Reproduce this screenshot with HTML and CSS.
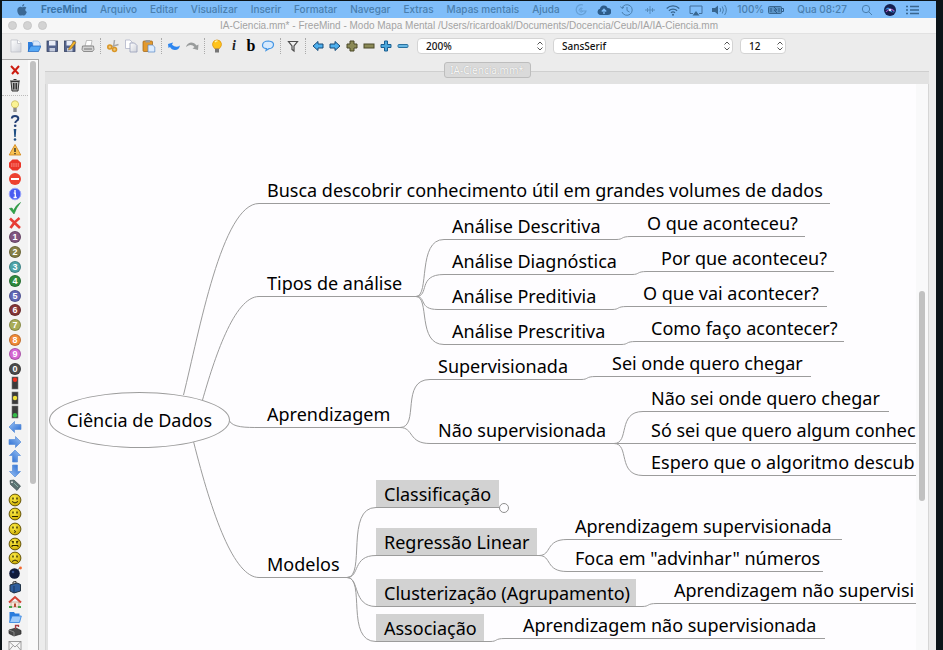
FILE: index.html
```html
<!DOCTYPE html>
<html lang="pt-BR">
<head>
<meta charset="utf-8">
<title>IA-Ciencia.mm* - FreeMind</title>
<link rel="stylesheet" href="styles.css">
</head>
<body>
<svg class="defs" aria-hidden="true">
  <defs>
    <radialGradient id="gy" cx=".4" cy=".35" r=".7"><stop offset="0" stop-color="#fff04a"/><stop offset="1" stop-color="#c9a800"/></radialGradient>
    <linearGradient id="gb" x1="0" y1="0" x2="1" y2="1"><stop offset="0" stop-color="#9cc4f5"/><stop offset="1" stop-color="#2468d0"/></linearGradient>
    <linearGradient id="gp" x1="0" y1="0" x2="1" y2="1"><stop offset="0" stop-color="#fff"/><stop offset="1" stop-color="#cfd2da"/></linearGradient>
    <symbol id="arrow" viewBox="0 0 14 14"><path d="M1 7 6.500 1.500V4.500H13V9.500H6.500V12.500Z" fill="url(#gb)" stroke="#5b8fd8" stroke-width=".7"/></symbol>
    <symbol id="nav" viewBox="0 0 14 14"><path d="M2 7 7 2.500V5H12V9H7V11.500Z" fill="#4fb0ee" stroke="#164a78" stroke-width="1"/></symbol>
    <symbol id="light" viewBox="0 0 14 14"><rect x="4" y="1" width="6" height="12" fill="#3b3b3b" stroke="#777" stroke-width=".6"/></symbol>
    <symbol id="face" viewBox="0 0 14 14"><circle cx="7" cy="7" r="5.900" fill="url(#gy)" stroke="#5b4b00" stroke-width=".9"/><path d="M5 4.500V6.500M9 4.500V6.500" stroke="#2c2400" stroke-width="1.300"/></symbol>
    <symbol id="updown" viewBox="0 0 8 12"><path d="M1.500 4.500 4 2 6.500 4.500M1.500 7.500 4 10 6.500 7.500" fill="none" stroke="#555" stroke-width="1"/></symbol>
  </defs>
</svg>
<div class="screen">
  <header class="menubar">
    <button class="apple" aria-label="Apple"><svg viewBox="0 0 12 12"><path d="M8.300 0C8.300 1.600 7.300 2.500 6.100 2.500 6.100 1.200 7 .2 8.300 0ZM6.200 3.300C6.800 3.300 7.400 2.700 8.500 2.800 9.300 2.800 10 3.200 10.400 3.800 8.700 4.900 9 7.200 10.800 7.900 10.200 9.700 9.100 11.600 7.900 11.600 7.200 11.600 6.900 11.200 6.200 11.200 5.400 11.200 5.100 11.600 4.400 11.600 2.700 11.600.9 8 1.400 5.500 1.800 3.200 4 2.400 5.200 3Z" fill="#3b6894"/></svg></button>
    <nav class="menus">
      <button class="app">FreeMind</button><button>Arquivo</button><button>Editar</button><button>Visualizar</button><button>Inserir</button><button>Formatar</button><button>Navegar</button><button>Extras</button><button>Mapas mentais</button><button>Ajuda</button>
    </nav>
    <div class="status">
      <svg viewBox="0 0 14 14" opacity=".45"><path d="M9 2A5 5 0 1 0 12 8H7V5" fill="none" stroke="#4a7fae" stroke-width="1.200"/><path d="M8.500 5.500A2 2 0 1 0 9 8" fill="none" stroke="#4a7fae"/></svg>
      <svg viewBox="0 0 14 14"><path d="M3.500 12A3.200 3.200 0 0 1 3 5.700 4 4 0 0 1 10.600 5 3.500 3.500 0 0 1 11 12Z" fill="#2d5c8a"/><path d="M7 11V6.500M4.800 8.500 7 6.200 9.200 8.500" fill="none" stroke="#7fbdf9" stroke-width="1.300"/></svg>
      <svg viewBox="0 0 14 14"><path d="M2 5A5.300 5.300 0 1 1 2 9M.5 3.500 2 5.500 4 4.300M7 4V7.500L9.500 9" fill="none" stroke="#4a7fae"/></svg>
      <svg viewBox="0 0 14 14"><path d="M2 7H12M4.500 5V9M7 3V11M9.500 5V9" fill="none" stroke="#568cbd"/></svg>
      <svg viewBox="0 0 14 14"><path d="M.7 5.500A9 9 0 0 1 13.300 5.500M2.900 7.700A6 6 0 0 1 11.100 7.700M5 9.800A3 3 0 0 1 9 9.800" fill="none" stroke="#38668f" stroke-width="1.300"/><circle cx="7" cy="11.700" r="1" fill="#38668f"/></svg>
      <svg viewBox="0 0 14 14"><path d="M4 10.500H1V3H13V10.500H10" fill="none" stroke="#426f9b"/><path d="M3.500 12.500 7 8 10.500 12.500Z" fill="#38668f"/></svg>
      <svg class="wide" viewBox="0 0 16 14"><path d="M0 5H3L6 2.500V11.500L3 9H0Z" fill="#38668f"/><path d="M8 5Q9.500 7 8 9M10.300 3.500Q12.500 7 10.300 10.500M12.600 2Q16 7 12.600 12" fill="none" stroke="#4a7fae"/></svg>
      <span class="pct">100%</span>
      <svg class="wide" viewBox="0 0 16 14"><rect x=".5" y="3.500" width="13" height="7" rx="1" fill="#5b93c5" stroke="#38668f"/><path d="M14 5.500H15.500V8.500H14M6 4 9 7H6L9 10M3 5V9M11 5V9" fill="none" stroke="#2d5c8a"/></svg>
      <span class="clock">Qua 08:27</span>
      <svg class="search" viewBox="0 0 14 14"><circle cx="6" cy="6" r="3.700" fill="none" stroke="#4a7fae"/><path d="M8.800 8.800 12 12" stroke="#4a7fae"/></svg>
      <svg class="siri" viewBox="0 0 14 14"><circle cx="7" cy="7" r="6" fill="#15204f"/><path d="M2 7Q5 2 8 7T12 7Q9 11 7 8T2 7Z" fill="#358ce0"/><path d="M3 9Q7 4 11 8" fill="none" stroke="#a957c7" stroke-width="1.200"/><circle cx="7" cy="7" r="1.300" fill="#d9f4ff"/></svg>
      <svg class="list" viewBox="0 0 14 14"><path d="M0 3.500H2M4 3.500H13M0 7H2M4 7H13M0 10.500H2M4 10.500H13" stroke="#38668f" stroke-width="1.300"/></svg>
    </div>
  </header>

  <div class="titlebar">
    <div class="lights"><i></i><i></i><i></i></div>
    <div class="title">IA-Ciencia.mm* - FreeMind - Modo Mapa Mental /Users/ricardoakl/Documents/Docencia/Ceub/IA/IA-Ciencia.mm</div>
  </div>

  <div class="toolbar">
    <div class="group">
      <button aria-label="Novo"><svg viewBox="0 0 14 14"><path d="M2 1H8.500L12 4.500V13H2Z" fill="url(#gp)" stroke="#b9bbc4" stroke-width=".7"/><path d="M8.500 1V4.500H12" fill="#fff" stroke="#b9bbc4" stroke-width=".7"/></svg></button>
      <button aria-label="Abrir"><svg viewBox="0 0 14 14"><path d="M1 3H5L6 4.500H11V12H1Z" fill="#2f7fdd"/><path d="M6 2H11L13 4V8H6Z" fill="#dbe9fa" stroke="#7fa8d8" stroke-width=".5"/><path d="M3.500 7H14L11.500 12.500H1Z" fill="#55a8f5" stroke="#1b62bb" stroke-width=".7"/></svg></button>
      <button aria-label="Salvar"><svg viewBox="0 0 14 14"><rect x="2" y="2" width="10.500" height="10.500" fill="#54648e" stroke="#35405f" stroke-width=".8"/><path d="M4 2H10.500V6.500H4Z" fill="#e9edf7"/><path d="M4.500 9H10V12.500H4.500Z" fill="#c4cbdd"/></svg></button>
      <button aria-label="Salvar como"><svg viewBox="0 0 14 14"><rect x="1.500" y="2" width="10.500" height="10.500" fill="#54648e" stroke="#35405f" stroke-width=".8"/><path d="M3.500 2H9.500V6.500H3.500Z" fill="#e9edf7"/><path d="M4 9H9.500V12.500H4Z" fill="#c4cbdd"/><path d="M6 9 11 2 13 3.500 8 10 5.500 11Z" fill="#f2b42b" stroke="#855d17" stroke-width=".5"/></svg></button>
      <button aria-label="Imprimir"><svg viewBox="0 0 14 14"><path d="M4 7 5.500 1.500H11L10 7Z" fill="#fff" stroke="#999" stroke-width=".6"/><path d="M1.500 7H12.500L13 10.500 11.500 12.500H2.500L1 10.500Z" fill="#d2d2d2" stroke="#777" stroke-width=".8"/><path d="M3 10H11" stroke="#777"/></svg></button>
    </div>
    <div class="group">
      <button aria-label="Recortar"><svg viewBox="0 0 14 14"><path d="M8.500 1 7.500 8M12.500 5.500 6 7.500" stroke="#a9a9a9" stroke-width="1.500"/><circle cx="3.800" cy="8" r="2" fill="#f2c878" stroke="#d99627" stroke-width="1.600"/><circle cx="8.500" cy="10.500" r="2" fill="#f2c878" stroke="#d99627" stroke-width="1.600"/></svg></button>
      <button aria-label="Copiar"><svg viewBox="0 0 14 14"><path d="M1.500 1H6L8 3V9.500H1.500Z" fill="#fff" stroke="#b1b5c9" stroke-width=".8"/><path d="M6 4H10.500L13 6.500V13H6Z" fill="url(#gp)" stroke="#979eb9" stroke-width=".8"/></svg></button>
      <button aria-label="Colar"><svg viewBox="0 0 14 14"><rect x="1" y="2" width="9.500" height="10.500" rx="1" fill="#e3992c" stroke="#9c6214" stroke-width=".7"/><rect x="3.500" y="1" width="4.500" height="2.500" fill="#9b9b9b"/><path d="M6 6H10.500L12.800 8V13H6Z" fill="#dcecff" stroke="#5688c4" stroke-width=".7"/></svg></button>
    </div>
    <div class="group">
      <button aria-label="Desfazer"><svg viewBox="0 0 14 14"><path d="M1 5 6 3.500 5 5.800Q9 9.500 13 6.500 12 11 8 11 4.500 11 3 8L1.500 9Z" fill="#2e86ef"/></svg></button>
      <button aria-label="Refazer"><svg viewBox="0 0 14 14"><path d="M13 11 7.500 9.500 9.500 8Q6 4 1 8 2 4 6 3.500 9.500 3.500 11.500 6.500L13.500 5.500Z" fill="#999c9c"/></svg></button>
    </div>
    <div class="group tight">
      <button aria-label="Ícone"><svg viewBox="0 0 14 14"><path d="M4.500 9.500Q2 6.500 2.600 4.500A4.500 4.500 0 0 1 11.400 4.500Q12 6.500 9.500 9.500Z" fill="#ffc31c" stroke="#d88b00" stroke-width=".7"/><path d="M5 3Q6 1.800 7.500 2" stroke="#fff7ae" stroke-width="1.300" fill="none"/><rect x="5" y="9.700" width="4" height="3.800" fill="#777"/></svg></button>
      <button class="it">i</button>
      <button class="bo">b</button>
      <button aria-label="Nuvem"><svg viewBox="0 0 14 14"><path d="M5 11.500 5.500 9.700Q1.300 9.500 1.500 6 2 2 7.500 2 13 2.500 12.500 6 12 9.500 8 9.700Z" fill="#d7eafd" stroke="#4596e4" stroke-width="1.200"/></svg></button>
    </div>
    <div class="group">
      <button aria-label="Filtrar"><svg viewBox="0 0 14 14"><path d="M2.500 2.500H11.500L8 7V12L6 10.500V7Z" fill="#eee" stroke="#4c4c4c" stroke-width="1.200"/></svg></button>
    </div>
    <div class="group tight">
      <button aria-label="Anterior"><svg><use href="#nav"/></svg></button>
      <button aria-label="Próximo"><svg class="flip"><use href="#nav"/></svg></button>
      <button aria-label="Expandir"><svg viewBox="0 0 14 14"><path d="M5 2H9V5H12V9H9V12H5V9H2V5H5Z" fill="#8b8a56" stroke="#4a4928"/></svg></button>
      <button aria-label="Recolher"><svg viewBox="0 0 14 14"><rect x="2" y="5" width="10" height="4" fill="#8b8a56" stroke="#4a4928"/></svg></button>
      <button aria-label="Expandir filhos"><svg viewBox="0 0 14 14"><path d="M5.500 2H8.500V5.500H12V8.500H8.500V12H5.500V8.500H2V5.500H5.500Z" fill="#4da8dc" stroke="#1a5f91"/></svg></button>
      <button aria-label="Recolher filhos"><svg viewBox="0 0 14 14"><rect x="2" y="5.500" width="10" height="3" rx="1" fill="#68b7e2" stroke="#2a719f"/></svg></button>
    </div>
    <div class="picks">
      <label class="pick zoom"><select aria-label="Zoom"><option>200%</option></select><svg><use href="#updown"/></svg></label>
      <label class="pick font"><select aria-label="Fonte"><option>SansSerif</option></select><svg><use href="#updown"/></svg></label>
      <label class="pick size"><select aria-label="Tamanho"><option>12</option></select><svg><use href="#updown"/></svg></label>
    </div>
  </div>

  <div class="work">
    <aside class="side">
      <div class="icons">
        <div class="fixed">
          <button aria-label="Remover último"><svg viewBox="0 0 14 14"><path d="M3 3 10.500 11M11 3 4 11" stroke="#cc1c10" stroke-width="2"/></svg></button>
          <button aria-label="Remover todos"><svg viewBox="0 0 14 14"><path d="M3 3.500H11L10 13H4Z" fill="#b9b9b9" stroke="#333"/><path d="M2 3H12M5.500 1.500H8.500M5.500 5V11.500M7 5V11.500M8.500 5V11.500" stroke="#333" stroke-width="1"/></svg></button>
        </div>
        <div class="palette">
          <button aria-label="Ideia"><svg viewBox="0 0 14 14"><path d="M5 8.500Q3 6.500 3.500 4.500A3.600 3.600 0 0 1 10.500 4.500Q11 6.500 9 8.500Z" fill="#fbf394" stroke="#c7b85a" stroke-width=".8"/><rect x="5.300" y="9" width="3.400" height="4" fill="#8c8c8c"/></svg></button>
          <button aria-label="Pergunta"><svg viewBox="0 0 14 14"><path d="M3.800 4.500Q4 2 7 2 10.300 2 10.300 4.500 10.300 6 8.500 7 7.300 7.700 7.300 9" fill="none" stroke="#233f74" stroke-width="2"/><circle cx="7.200" cy="11.800" r="1.300" fill="#233f74"/></svg></button>
          <button aria-label="Importante"><svg viewBox="0 0 14 14"><path d="M5.700 1H8.300L7.700 9H6.300Z" fill="#1f4f83"/><circle cx="7" cy="11.500" r="1.300" fill="#1f4f83"/></svg></button>
          <button aria-label="Cuidado"><svg viewBox="0 0 14 14"><path d="M7 1.500 12.800 12H1.200Z" fill="#f9c253" stroke="#d58a1e" stroke-width=".9"/><path d="M7 5V9M7 10V11.300" stroke="#222" stroke-width="1.300"/></svg></button>
          <button aria-label="Pare"><svg viewBox="0 0 14 14"><path d="M4.500 1.500H9.500L13 4.800V9.200L9.500 12.500H4.500L1 9.200V4.800Z" fill="#ea3528"/><path d="M3 6H11M3 8H11" stroke="#ff9d93" stroke-dasharray="1.500 .7"/></svg></button>
          <button aria-label="Proibido"><svg viewBox="0 0 14 14"><circle cx="7" cy="7" r="6" fill="#ed4130"/><path d="M3 7H11" stroke="#fff" stroke-width="2"/></svg></button>
          <button aria-label="Informação"><svg viewBox="0 0 14 14"><circle cx="7" cy="7" r="5.800" fill="#4a5cf1" stroke="#99a4fa"/><path d="M7 3V5M5.800 6H7.300V10.500M5.500 10.500H8.800" fill="none" stroke="#fff" stroke-width="1.300"/></svg></button>
          <button aria-label="Certo"><svg viewBox="0 0 14 14"><path d="M1.500 7.500 4 7 5.500 9.500Q8 4 12.500 1.500 8 7 6 13Z" fill="#2fa646" stroke="#20883a" stroke-width=".6"/></svg></button>
          <button aria-label="Errado"><svg viewBox="0 0 14 14"><path d="M2 2.500 12 12M11.500 2Q6 6 2.500 12" fill="none" stroke="#e73c35" stroke-width="2.600"/></svg></button>
          <button class="num n1"><span>1</span></button>
          <button class="num n2"><span>2</span></button>
          <button class="num n3"><span>3</span></button>
          <button class="num n4"><span>4</span></button>
          <button class="num n5"><span>5</span></button>
          <button class="num n6"><span>6</span></button>
          <button class="num n7"><span>7</span></button>
          <button class="num n8"><span>8</span></button>
          <button class="num n9"><span>9</span></button>
          <button class="num n0"><span>0</span></button>
          <button aria-label="Vermelho"><svg viewBox="0 0 14 14"><use href="#light"/><circle cx="7" cy="3.700" r="2.200" fill="#f2301f"/></svg></button>
          <button aria-label="Amarelo"><svg viewBox="0 0 14 14"><use href="#light"/><circle cx="7" cy="7" r="2.200" fill="#f1e13b"/></svg></button>
          <button aria-label="Verde"><svg viewBox="0 0 14 14"><use href="#light"/><circle cx="7" cy="10.300" r="2.200" fill="#36bd4a"/></svg></button>
          <button aria-label="Esquerda"><svg><use href="#arrow"/></svg></button>
          <button aria-label="Direita"><svg class="flip"><use href="#arrow"/></svg></button>
          <button aria-label="Acima"><svg class="up"><use href="#arrow"/></svg></button>
          <button aria-label="Abaixo"><svg class="down"><use href="#arrow"/></svg></button>
          <button aria-label="Anexo"><svg viewBox="0 0 14 14"><path d="M2 2.500 6 2 12.500 8 9 12.500 2.500 6.500Z" fill="#5c7272" stroke="#3d5050" stroke-width=".7"/><circle cx="4" cy="4.200" r=".9" fill="#eee"/><path d="M6 5 10 9" stroke="#9cb" stroke-width=".7"/></svg></button>
          <button aria-label="Feliz"><svg viewBox="0 0 14 14"><use href="#face"/><path d="M4 8.500Q7 11.500 10 8.500" fill="none" stroke="#2c2400"/></svg></button>
          <button aria-label="Neutro"><svg viewBox="0 0 14 14"><use href="#face"/><path d="M4 9.500H10" stroke="#2c2400"/></svg></button>
          <button aria-label="Surpreso"><svg viewBox="0 0 14 14"><use href="#face"/><path d="M6 8.500Q9 9 6.500 11" fill="none" stroke="#2c2400"/></svg></button>
          <button aria-label="Zangado"><svg viewBox="0 0 14 14"><use href="#face"/><path d="M3.500 4 6 5M10.500 4 8 5M4 10V8.500H10V10" fill="none" stroke="#2c2400"/></svg></button>
          <button aria-label="Triste"><svg viewBox="0 0 14 14"><use href="#face"/><path d="M4 10.500Q7 7.500 10 10.500" fill="none" stroke="#2c2400"/></svg></button>
          <button aria-label="Bomba"><svg viewBox="0 0 14 14"><circle cx="6.500" cy="7.500" r="5.300" fill="#101b3c"/><circle cx="5" cy="6" r="1.300" fill="#34508d"/><path d="M10 3.500 12 2" stroke="#555"/><circle cx="12.500" cy="2" r="1.400" fill="#f3692e"/></svg></button>
          <button aria-label="Pasta"><svg viewBox="0 0 14 14"><path d="M2 5 9 3 12.500 4.500V11L6 13 2 11Z" fill="#2e5d9c" stroke="#234"/><path d="M5 4V2L8 1.500V3" fill="none" stroke="#333"/><path d="M6 6V13" stroke="#16345f"/></svg></button>
          <button aria-label="Casa"><svg viewBox="0 0 14 14"><path d="M3 7V12H11V7Z" fill="#f7e7d9" stroke="#aa8670" stroke-width=".6"/><path d="M1 7.500 7 2 13 7.500" fill="none" stroke="#d24436" stroke-width="2"/><path d="M6 8.500H8V12H6Z" fill="#b64c35"/><path d="M1 12H4M10 12H13" stroke="#48a34a" stroke-width="1.800"/></svg></button>
          <button aria-label="Diretório"><svg viewBox="0 0 14 14"><path d="M1.500 2H6L7 3.500H11.500V12H1.500Z" fill="#2b7ddd"/><path d="M4 6H13.300L11.500 12.500H1.500Z" fill="#9fcbfa" stroke="#2b7ddd" stroke-width=".8"/></svg></button>
          <button aria-label="Caixa postal"><svg viewBox="0 0 14 14"><path d="M1 6 8 4 13 6.500V10L6 12 1 9.500Z" fill="#4b4b4b" stroke="#222" stroke-width=".7"/><path d="M1 6 6 8V12" fill="none" stroke="#888"/><path d="M7.500 5V1.500H10.500V3" fill="none" stroke="#a83c45" stroke-width="1.300"/></svg></button>
          <button aria-label="Correio"><svg viewBox="0 0 14 14"><rect x="1" y="2.500" width="12" height="9" fill="#f7f7f7" stroke="#888" stroke-width=".8"/><path d="M1 2.500 7 8 13 2.500M1 11.500 5.200 6.500M13 11.500 8.800 6.500" fill="none" stroke="#888" stroke-width=".8"/></svg></button>
        </div>
      </div>
      <div class="side-track"><div class="side-thumb"></div></div>
    </aside>
    <main class="pane">
      <div class="tabs"><button class="tab">IA-Ciencia.mm*</button></div>
      <div class="view">
        <div class="canvas">
          <svg class="links" viewBox="48 84 868 566" aria-hidden="true">
            <g fill="none" stroke="#9c9c9c">
              <path d="M183.500 395C199 333 222 203.500 259 203.500"/>
              <path d="M202.500 400C214 360 234 296.500 259 296.500"/>
              <path d="M229.500 421C233 427.500 246 427.500 259 427.500"/>
              <path d="M193.500 441.500C212 515 234 577.500 259 577.500"/>
              <path d="M416 296.500C430 296.500 417 239.500 444 239.500M416 296.500C430 296.500 417 274.500 444 274.500M416 296.500C427 296.500 418 309.500 438 309.500H444M416 296.500C430 296.500 417 344.500 444 344.500"/>
              <path d="M616 239.500C624 239.500 620 236.500 631 236.500H640M632 274.500C640 274.500 636 271.500 647 271.500H654M612 309.500C620 309.500 616 306.500 627 306.500H635M621 344.500C629 344.500 625 341.500 636 341.500H644"/>
              <path d="M400 427.500C420 427.500 400 379.500 430 379.500M400 427.500C414 427.500 408 443.500 430 443.500"/>
              <path d="M581 379.500C589 379.500 585 376.500 596 376.500H604"/>
              <path d="M614 443.500C630 443.500 617 411.500 643 411.500M614 443.500H643M614 443.500C630 443.500 617 475.500 643 475.500"/>
              <path d="M347 577.500C366 577.500 345 507.500 376 507.500M347 577.500C360 577.500 352 555.500 376 555.500M347 577.500C360 577.500 352 606.500 376 606.500M347 577.500C366 577.500 345 641.500 376 641.500"/>
              <path d="M536 555.500H539C552 555.500 545 539.500 567 539.500M539 555.500C552 555.500 545 571.500 567 571.500"/>
              <path d="M635 606.500H642C650 606.500 646 603.500 657 603.500H666M483 641.500H490C498 641.500 494 638.500 505 638.500H515"/>
            </g>
          </svg>
          <div class="root">Ciência de Dados</div>
          <div class="node busca">Busca descobrir conhecimento útil em grandes volumes de dados</div>
          <div class="node tipos">Tipos de análise</div>
          <div class="node descritiva">Análise Descritiva</div>
          <div class="node diagnostica">Análise Diagnóstica</div>
          <div class="node preditiva">Análise Preditivia</div>
          <div class="node prescritiva">Análise Prescritiva</div>
          <div class="node oque">O que aconteceu?</div>
          <div class="node porque">Por que aconteceu?</div>
          <div class="node vai">O que vai acontecer?</div>
          <div class="node como">Como faço acontecer?</div>
          <div class="node aprend">Aprendizagem</div>
          <div class="node superv">Supervisionada</div>
          <div class="node sei">Sei onde quero chegar</div>
          <div class="node naosuperv">Não supervisionada</div>
          <div class="node naosei">Não sei onde quero chegar</div>
          <div class="node sosei">Só sei que quero algum conhec</div>
          <div class="node espero">Espero que o algoritmo descub</div>
          <div class="node modelos">Modelos</div>
          <div class="node marked classif">Classificação<i class="fold"></i></div>
          <div class="node marked regr">Regressão Linear</div>
          <div class="node regr1">Aprendizagem supervisionada</div>
          <div class="node regr2">Foca em "advinhar" números</div>
          <div class="node marked clust">Clusterização (Agrupamento)</div>
          <div class="node clust1">Aprendizagem não supervisi</div>
          <div class="node marked assoc">Associação</div>
          <div class="node assoc1">Aprendizagem não supervisionada</div>
        </div>
        <div class="track"><div class="thumb"></div></div>
      </div>
    </main>
  </div>
</div>
</body>
</html>
```
FILE: styles.css
```css
* { box-sizing: border-box; }
body { margin: 0; background: #111; font-family: "Noto Sans", sans-serif; }
button { margin: 0; padding: 0; border: 0; background: none; font: inherit; color: inherit; }
svg { display: block; width: 14px; height: 14px; }
.defs { position: absolute; width: 0; height: 0; }

.screen {
  display: flex; flex-direction: column; height: 100vh; overflow: hidden;
  border: solid #0c1418; border-width: 1px 7px 0 2px; background: #ececec;
}

.menubar {
  display: flex; align-items: center; flex: none; height: 17px; padding: 0 16px 0 14px;
  background: #7fbdf9; color: #4a7fae; font: 500 10px/17px Inter, sans-serif;
}
.apple svg { width: 12px; height: 12px; }
.menus { display: flex; gap: 13px; margin-left: 13px; white-space: nowrap; }
.app { font-weight: 700; color: #3b74a8; }
.status { display: flex; align-items: center; gap: 9px; margin-left: auto; white-space: nowrap; }
.status .wide { width: 16px; }
.pct { margin-right: -5px; }
.clock { margin: 0 4px; }

.titlebar {
  display: flex; align-items: center; flex: none; height: 16px; padding: 0 6px;
  background: #f7f7f7; border-bottom: 1px solid #e2e2e2;
}
.lights { display: flex; gap: 6px; flex: 1; }
.lights i { width: 9px; height: 9px; border-radius: 50%; background: #d3d3d3; border: 1px solid #c8c8c8; }
.title { color: #a3a3a3; font: 10px/15px "Liberation Sans", sans-serif; white-space: nowrap; }
.titlebar::after { content: ""; flex: 1; }

.toolbar { display: flex; align-items: center; flex: none; height: 25px; padding: 0 0 2px 7px; }
.group { display: flex; gap: 4px; }
.tight { gap: 3px; }
.group + .group { margin-left: 5px; padding-left: 5px; border-left: 1px dotted #aaa; }
.group button { width: 14px; height: 16px; display: grid; place-items: center; }
.group .it { font: italic 700 14px/16px "Liberation Serif", serif; color: #222; }
.group .bo { font: 700 16px/16px "Liberation Serif", serif; color: #000; }
.flip { transform: scaleX(-1); }
.up { transform: rotate(90deg); }
.down { transform: rotate(-90deg); }
.picks { display: flex; gap: 7px; margin-left: 7px; }
.pick { display: grid; align-items: center; }
.pick > * { grid-area: 1 / 1; }
.pick select {
  appearance: none; width: 100%; height: 16px; margin: 0; padding: 0 8px; border: 1px solid #d4d4d4;
  border-radius: 4px; background: #fff; color: #111; font: 500 10px/14px "Noto Sans", sans-serif;
}
.pick svg { width: 8px; height: 12px; justify-self: end; margin-right: 2px; pointer-events: none; }
.zoom { width: 129px; }
.font { width: 180px; }
.size { width: 46px; }

.work { display: flex; flex: 1; min-height: 0; }
.side {
  display: flex; flex: none; width: 37px; border: 1px solid #a9a9a9; border-left: 0; border-bottom: 0;
  background: #f3f3f3;
}
.icons { display: flex; flex-direction: column; width: 26px; }
.icons button { display: grid; place-items: center; width: 26px; }
.fixed {
  display: grid; grid-auto-rows: 15px; margin-bottom: 3px; padding: 2px 0 3px;
  border-bottom: 1px dotted #bbb;
}
.palette { display: grid; grid-auto-rows: 1fr; flex: 1; min-height: 0; margin-bottom: -3px; }
.palette button { min-height: 0; }
.num span {
  width: 12px; height: 12px; border-radius: 50%; border: 1px solid #0003; color: #fff; text-align: center;
  font: 700 9px/10px "Liberation Sans", sans-serif;
}
.n1 span { background: #80557f; }
.n2 span { background: #857f45; }
.n3 span { background: #4da3a7; }
.n4 span { background: #2f8a3e; }
.n5 span { background: #5f66b5; }
.n6 span { background: #853536; }
.n7 span { background: #a9ad58; }
.n8 span { background: #f28a37; }
.n9 span { background: #d567d3; }
.n0 span { background: #4b4b4b; }
.side-track { flex: 1; padding: 1px 2px; background: #fafafa; }
.side-thumb { width: 6px; height: 72%; border-radius: 3px; background: #c1c1c1; }

.pane { display: flex; flex-direction: column; flex: 1; min-width: 0; margin: 0 7px 0 6px; }
.tabs {
  display: flex; justify-content: center; flex: none; height: 25px; padding-top: 3px;
  background: linear-gradient(#ececec 12px, #cfcfcf 12px, #cfcfcf 13px, #e2e2e2 13px);
}
.tab {
  width: 87px; height: 16px; border: 1px solid #bdbdbd; border-radius: 3px; background: #dadada;
  color: #f8f8f8; font-size: 10px; line-height: 14px; text-shadow: 0 0 1px #999;
}
.view {
  display: flex; flex: 1; min-height: 0; padding-left: 2px;
  border: solid #d6d6d6; border-width: 0 1px; background: #e2e2e2;
}
.canvas { position: relative; flex: 1; overflow: hidden; background: #fefdff; color: #000; font-size: 18px; line-height: 27px; }
.track { flex: none; width: 12px; padding-left: 3px; background: #f9f9fa; }
.thumb { width: 6px; height: 210px; margin-top: 207px; border-radius: 3px; background: #c1c1c1; }

.links { position: absolute; left: 0; top: 0; width: 868px; height: 566px; }
.root {
  position: absolute; left: 1px; top: 308px; width: 181px; height: 56px; border: 1px solid #9c9c9c;
  border-radius: 50%; background: #fefdff; line-height: 55px; text-align: center; white-space: nowrap;
}
.node { position: absolute; height: 28px; padding: 1px 8px 0; border-bottom: 1px solid #9c9c9c; white-space: nowrap; }
.marked { background: #d2d2d2; }
.fold {
  position: absolute; right: -10px; bottom: -6px; width: 10px; height: 10px;
  border: 1px solid #8f8f8f; border-radius: 50%; background: #fefdff;
}
.busca { left: 211px; top: 92px; width: 571px; }
.tipos { left: 211px; top: 185px; width: 158px; }
.descritiva { left: 396px; top: 128px; width: 173px; }
.diagnostica { left: 396px; top: 163px; width: 189px; }
.preditiva { left: 396px; top: 198px; width: 169px; }
.prescritiva { left: 396px; top: 233px; width: 178px; }
.oque { left: 591px; top: 125px; width: 166px; }
.porque { left: 605px; top: 160px; width: 181px; }
.vai { left: 587px; top: 195px; width: 192px; }
.como { left: 595px; top: 230px; width: 201px; }
.aprend { left: 211px; top: 316px; width: 142px; }
.superv { left: 382px; top: 268px; width: 152px; }
.sei { left: 556px; top: 265px; width: 207px; }
.naosuperv { left: 382px; top: 332px; width: 185px; }
.naosei { left: 595px; top: 300px; width: 246px; }
.sosei { left: 595px; top: 332px; right: 0; }
.espero { left: 595px; top: 364px; right: 0; }
.modelos { left: 211px; top: 466px; width: 89px; }
.classif { left: 328px; top: 396px; width: 123px; }
.regr { left: 328px; top: 444px; width: 161px; }
.regr1 { left: 519px; top: 428px; width: 275px; }
.regr2 { left: 519px; top: 460px; width: 256px; }
.clust { left: 328px; top: 495px; width: 260px; }
.clust1 { left: 618px; top: 492px; right: 0; }
.assoc { left: 328px; top: 530px; width: 108px; }
.assoc1 { left: 467px; top: 527px; width: 310px; }
```
